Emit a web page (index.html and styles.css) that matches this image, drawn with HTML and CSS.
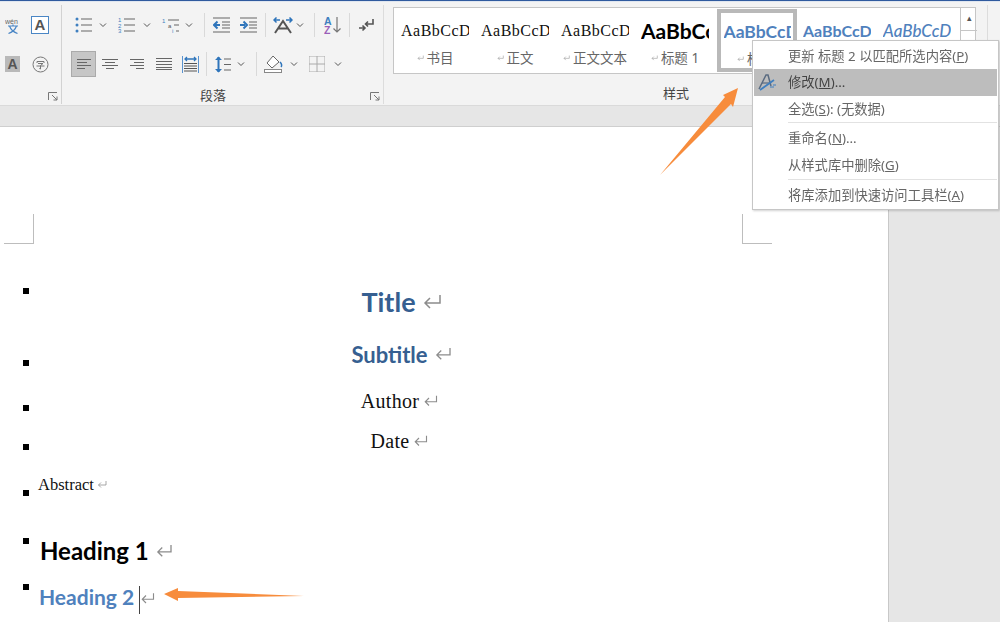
FILE: index.html
```html
<!DOCTYPE html>
<html lang="zh">
<head>
<meta charset="utf-8">
<title>Word</title>
<link rel="stylesheet" href="styles.css">
</head>
<body>
<svg class="defs" width="0" height="0">
  <symbol id="ret" viewBox="0 0 20 16"><path d="M18 1v8H3M8 4 3 9l5 5" fill="none" stroke="#8c8c8c" stroke-width="1.5"/></symbol>
  <symbol id="chev" viewBox="0 0 8 8"><path d="M1 2.5 4 5.5 7 2.5" fill="none" stroke="#555" stroke-width="1"/></symbol>
  <symbol id="launch" viewBox="0 0 10 9"><path d="M.5 8V.5H9M4 3l5 5M9 4.5V8H5.5" fill="none" stroke="#777" stroke-width="1"/></symbol>
</svg>
<div class="app">
  <header class="ribbon">
    <section class="grp font-end">
      <div class="tool-row r-top">
        <svg class="ic ml5" width="16" height="17" viewBox="0 0 16 17"><text x="0" y="7" class="wen">wén</text><path d="M3 9h10M8 7.5V9M4.5 9c1 3 4 6 8 7.500M11.500 9c-1 3-4 6-8 7.500" fill="none" stroke="#4a86c5" stroke-width="1.200"/></svg>
        <span class="boxA">A</span>
      </div>
      <div class="tool-row r-bot">
        <span class="grayA">A</span>
        <svg class="ic ml12" width="17" height="17" viewBox="0 0 17 17"><circle cx="8.500" cy="8.500" r="7.500" fill="none" stroke="#777"/><path d="M5 7V5.500h7V7M6 7.500h5L8.500 9.500V13l-1.200-.5M4.500 10h8" fill="none" stroke="#777"/></svg>
      </div>
      <svg class="launch lf" width="10" height="9"><use href="#launch"/></svg>
    </section>
    <section class="grp para-grp">
      <div class="tool-row r-top">
        <svg class="ic ml13" width="18" height="16" viewBox="0 0 18 16"><g fill="#3f7fc0"><circle cx="2" cy="2" r="1.500"/><circle cx="2" cy="8" r="1.500"/><circle cx="2" cy="14" r="1.500"/></g><path d="M6 2h11M6 8h11M6 14h11" stroke="#666" stroke-width="1.200"/></svg>
        <svg class="chev ml6" width="8" height="8"><use href="#chev"/></svg>
        <svg class="ic ml11" width="18" height="16" viewBox="0 0 18 16"><g fill="#3f7fc0" font-size="6" font-family="Liberation Sans"><text x="0" y="5">1</text><text x="0" y="11">2</text><text x="0" y="16">3</text></g><path d="M6 2h11M6 8h11M6 14h11" stroke="#666" stroke-width="1.200"/></svg>
        <svg class="chev ml7" width="8" height="8"><use href="#chev"/></svg>
        <svg class="ic ml11" width="18" height="16" viewBox="0 0 18 16"><g font-size="6" font-family="Liberation Sans"><text x="0" y="6" fill="#3f7fc0">1</text><text x="6" y="11" fill="#555">a</text><text x="10" y="16" fill="#3f7fc0">i</text></g><path d="M6 3h11M12 8h5M14 14h3" stroke="#666" stroke-width="1.200"/></svg>
        <svg class="chev ml5" width="8" height="8"><use href="#chev"/></svg>
        <i class="sep ml11"></i>
        <svg class="ic ml8" width="17" height="16" viewBox="0 0 17 16"><path d="M0 1h17M9 5h8M9 8h8M9 11h8M0 15h17" stroke="#666" stroke-width="1.200"/><path d="M7 8H2M4.500 4.500 1 8l3.500 3.500" fill="none" stroke="#2f75bb" stroke-width="2"/></svg>
        <svg class="ic ml10" width="17" height="16" viewBox="0 0 17 16"><path d="M0 1h17M9 5h8M9 8h8M9 11h8M0 15h17" stroke="#666" stroke-width="1.200"/><path d="M0 8h5M3.500 4.500 7 8l-3.500 3.500" fill="none" stroke="#2f75bb" stroke-width="2"/></svg>
        <i class="sep ml8"></i>
        <svg class="ic ml7" width="20" height="17" viewBox="0 0 20 17"><path d="M2 16 10 4l8 12M5 11.500h10" fill="none" stroke="#555" stroke-width="2"/><path d="M1 3h6M3.500.5 1 3l2.500 2.500M13 3h6M16.500.5 19 3l-2.500 2.500" fill="none" stroke="#2f75bb" stroke-width="1.500"/></svg>
        <svg class="chev ml3" width="8" height="8"><use href="#chev"/></svg>
        <i class="sep ml10"></i>
        <svg class="ic ml9" width="17" height="18" viewBox="0 0 17 18"><text x="0" y="8.500" class="az blue">A</text><text x="0" y="17.500" class="az purple">Z</text><path d="M13 1v15M9.500 12.500 13 16l3.500-3.500" fill="none" stroke="#777" stroke-width="1.200"/></svg>
        <i class="sep ml8"></i>
        <svg class="ic ml8" width="16" height="14" viewBox="0 0 16 14"><path d="M15 1v5H8M10 3.500 7.500 6 10 8.500" fill="none" stroke="#555" stroke-width="1.600"/><path d="M1 10h6M4.500 7.500 7 10l-2.500 2.500" fill="none" stroke="#555" stroke-width="1.600"/></svg>
      </div>
      <div class="tool-row r-bot">
        <span class="align-on ml9"><svg width="14" height="10" viewBox="0 0 14 10"><path d="M0 .5h14M0 3.500h10M0 6.500h14M0 9.500h8" stroke="#666"/></svg></span>
        <svg class="ic ml6" width="16" height="11" viewBox="0 0 16 11"><path d="M0 .5h16M3 3.500h10M0 6.500h16M4 9.500h8" stroke="#666"/></svg>
        <svg class="ic ml12" width="14" height="11" viewBox="0 0 14 11"><path d="M0 .5h14M4 3.500h10M0 6.500h14M6 9.500h8" stroke="#666"/></svg>
        <svg class="ic ml12" width="16" height="12" viewBox="0 0 16 12"><path d="M0 .5h16M0 3.500h16M0 6.500h16M0 9.500h16M0 11.500h16" stroke="#666"/></svg>
        <svg class="ic ml10" width="17" height="17" viewBox="0 0 17 17"><path d="M.5 0v17M16.500 0v17" stroke="#5a93cf"/><path d="M3 3h11M5 1 3 3l2 2M12 1l2 2-2 2" fill="none" stroke="#2f75bb" stroke-width="1.300"/><path d="M2 7.500h13M2 10h13M2 12.500h13M2 15h13" stroke="#555"/></svg>
        <i class="sep ml7 h-low"></i>
        <svg class="ic ml8" width="16" height="17" viewBox="0 0 16 17"><path d="M3.500 1v15" stroke="#2f75bb" stroke-width="2"/><path d="M0 4 3.500.5 7 4M0 13l3.500 3.500L7 13" fill="#2f75bb"/><path d="M9 3h7M9 8.500h7M9 14h7" stroke="#666" stroke-width="1.200"/></svg>
        <svg class="chev ml6" width="8" height="8"><use href="#chev"/></svg>
        <i class="sep ml11 h-low"></i>
        <svg class="ic ml7" width="19" height="18" viewBox="0 0 19 18"><path d="M9 1 3 8l5 5 7-6z" fill="#fff" stroke="#666"/><path d="M16 7c2 2 2 4 1 5" fill="none" stroke="#2f75bb" stroke-width="1.500"/><rect x=".5" y="14.500" width="17" height="3" fill="#fff" stroke="#888"/></svg>
        <svg class="chev ml7" width="8" height="8"><use href="#chev"/></svg>
        <svg class="ic ml11" width="16" height="16" viewBox="0 0 16 16"><path d="M.5.500h15M.5 15.500h15M.5.500v15M15.500.500v15" stroke="#aaa" stroke-dasharray="1 1"/><path d="M8 0v16M0 8h16" stroke="#aaa"/></svg>
        <svg class="chev ml9" width="8" height="8"><use href="#chev"/></svg>
      </div>
      <div class="grp-label para-label">段落</div>
      <svg class="launch lp" width="10" height="9"><use href="#launch"/></svg>
    </section>
    <section class="styles-grp">
      <div class="gallery">
        <div class="style-item"><span class="sample serif">AaBbCcD</span><span class="style-name"><svg width="7" height="6"><use href="#ret"/></svg>书目</span></div>
        <div class="style-item"><span class="sample serif">AaBbCcD</span><span class="style-name"><svg width="7" height="6"><use href="#ret"/></svg>正文</span></div>
        <div class="style-item"><span class="sample serif">AaBbCcD</span><span class="style-name"><svg width="7" height="6"><use href="#ret"/></svg>正文文本</span></div>
        <div class="style-item"><span class="sample h1s">AaBbCcD</span><span class="style-name"><svg width="7" height="6"><use href="#ret"/></svg>标题 1</span></div>
        <div class="style-item picked"><span class="sample h2s">AaBbCcD</span><span class="style-name"><svg width="7" height="6"><use href="#ret"/></svg>标题</span></div>
        <div class="style-item"><span class="sample h3s">AaBbCcD</span></div>
        <div class="style-item"><span class="sample h4s">AaBbCcD</span></div>
        <div class="gal-scroll"><b class="up">▴</b><b></b></div>
      </div>
      <div class="grp-label styles-label">样式</div>
    </section>
  </header>
  <div class="band"></div>
  <main class="doc">
    <article class="page">
      <div class="row r1"><i class="bullet"></i><div class="c title">Title<svg class="mk mk-l"><use href="#ret"/></svg></div></div>
      <div class="row r2"><i class="bullet"></i><div class="c subtitle">Subtitle<svg class="mk mk-m"><use href="#ret"/></svg></div></div>
      <div class="row r3"><i class="bullet"></i><div class="c author">Author<svg class="mk mk-s"><use href="#ret"/></svg></div></div>
      <div class="row r4"><i class="bullet"></i><div class="c author">Date<svg class="mk mk-s"><use href="#ret"/></svg></div></div>
      <div class="row r5"><i class="bullet"></i><div class="abstract">Abstract<svg class="mk mk-xs"><use href="#ret"/></svg></div></div>
      <div class="row r6"><i class="bullet"></i><div class="h1">Heading 1<svg class="mk mk-m"><use href="#ret"/></svg></div></div>
      <div class="row r7"><i class="bullet"></i><div class="h2">Heading 2<i class="caret"></i><svg class="mk mk-m2"><use href="#ret"/></svg></div></div>
      <i class="crop crop-l"></i>
      <i class="crop crop-r"></i>
    </article>
    <aside class="side"></aside>
  </main>

  <nav class="menu">
    <div class="mi mi-first">更新 标题 2 以匹配所选内容(<u>P</u>)</div>
    <div class="mi on">
      <svg class="mi-ic" width="20" height="19" viewBox="0 0 20 19"><path d="M2 16 9 2h2l3 11" fill="none" stroke="#5a6b80" stroke-width="1.500"/><path d="M5 10h7" stroke="#5a6b80" stroke-width="1.200"/><path d="M3 17 17 7" stroke="#3f7fc0" stroke-width="1.800"/><path d="M13 14h4M16 12h3" stroke="#3f7fc0"/></svg>
      修改(<u>M</u>)...
    </div>
    <div class="mi">全选(<u>S</u>): (无数据)</div>
    <hr>
    <div class="mi">重命名(<u>N</u>)...</div>
    <div class="mi">从样式库中删除(<u>G</u>)</div>
    <hr>
    <div class="mi">将库添加到快速访问工具栏(<u>A</u>)</div>
  </nav>

  <svg class="arrow arrow-a" width="90" height="110" viewBox="0 0 90 110"><path d="M2 101 67 23 65 21 80 14 75 33 73 30z" fill="#f78c3c"/></svg>
  <svg class="arrow arrow-b" width="150" height="16" viewBox="0 0 150 16"><path d="M6 8 20 2v3l126 5-126 2v3z" fill="#f78c3c"/></svg>
</div>
</body>
</html>
```
FILE: styles.css
```css
* { box-sizing: border-box; }
html, body { margin: 0; padding: 0; height: 622px; overflow: hidden; background: #fff; }
body { font-family: "Noto Sans", "Noto Sans CJK SC", sans-serif; color: #444; }
.defs { position: absolute; }
.app { position: relative; width: 1000px; height: 622px; overflow: hidden; filter: blur(.3px); }

.ribbon { display: flex; height: 105px; background: #f3f3f3; border-top: 1px solid #2f5a9e; box-shadow: inset 0 1px 0 #dfe6f0; }
.grp { position: relative; flex: none; height: 99px; margin-top: 4px; }
.font-end { width: 62px; border-right: 1px solid #d2d2d2; }
.para-grp { width: 322px; border-right: 1px solid #dcdcdc; }
.tool-row { display: flex; align-items: center; height: 20px; }
.r-top { margin-top: 10px; }
.r-bot { margin-top: 16px; height: 26px; }
.ic, .chev { flex: none; display: block; }
.ml3 { margin-left: 3px; } .ml5 { margin-left: 5px; } .ml6 { margin-left: 6px; } .ml7 { margin-left: 7px; }
.ml8 { margin-left: 8px; } .ml9 { margin-left: 9px; } .ml10 { margin-left: 10px; } .ml11 { margin-left: 11px; }
.ml12 { margin-left: 12px; } .ml13 { margin-left: 13px; }
.sep { display: block; flex: none; width: 1px; height: 24px; background: #d9d9d9; }
.h-low { height: 24px; }
.wen { font: 7px "Liberation Sans", sans-serif; fill: #666; }
.boxA { flex: none; width: 18px; height: 18px; margin-left: 10px; border: 1px solid #4a86c5; background: #fff; font: 700 15px/16px "Liberation Sans", sans-serif; color: #555; text-align: center; }
.grayA { flex: none; width: 15px; height: 16px; margin-left: 5px; background: #b9b9b9; font: 700 14px/16px "Liberation Sans", sans-serif; color: #555; text-align: center; }
.align-on { flex: none; display: flex; align-items: center; justify-content: center; width: 25px; height: 26px; background: #c6c6c6; border: 1px solid #aaa; }
.az { font: 700 10.500px "Liberation Sans", sans-serif; }
.blue { fill: #3f7fc0; } .purple { fill: #9a5fb8; }
.launch { position: absolute; top: 87px; }
.lf { left: 48px; } .lp { left: 308px; }
.grp-label { font-size: 13px; line-height: 16px; color: #444; text-align: center; white-space: nowrap; }
.para-label { position: absolute; left: 136px; top: 82px; width: 30px; }

.styles-grp { position: relative; flex: none; width: 604px; padding: 6px 0 0 9px; }
.styles-grp::after { content: ""; position: absolute; right: 0; top: 4px; width: 1px; height: 99px; background: #dcdcdc; }
.gallery { display: flex; width: 583px; height: 67px; background: #fff; border: 1px solid #c6c6c6; padding-left: 7px; }
.style-item { flex: none; display: flex; flex-direction: column; align-items: center; width: 80px; height: 63px; padding: 4px 12px 0 0; overflow: hidden; }
.sample { display: block; flex: none; width: 68px; height: 38px; overflow: hidden; white-space: nowrap; line-height: 38px; color: #111; text-align: left; }
.serif { font: 16px/38px "Liberation Serif", serif; letter-spacing: .5px; }
.h1s { font: 700 21px/38px "Lato", sans-serif; color: #000; }
.h2s { font: 700 17.500px/38px "Lato", sans-serif; color: #4f81bd; }
.h3s { font: 700 16px/38px "Lato", sans-serif; color: #4f81bd; }
.h4s { font: italic 500 17px/38px "Lato", sans-serif; color: #4f81bd; }
.style-name { display: flex; align-items: center; gap: 3px; font-size: 13.500px; line-height: 16px; color: #666; white-space: nowrap; }
.style-item.picked { margin: 1px 6px 0 -4px; width: 80px; height: 63px; border: 4px solid #b9b9b9; padding: 0 2px; }
.picked .sample { width: 67px; }
.picked .style-name { align-self: flex-start; margin-left: 14px; }
.gal-scroll { flex: none; display: flex; flex-direction: column; width: 17px; margin-left: -3px; }
.gal-scroll b { display: block; height: 23px; border: 1px solid #c6c6c6; border-width: 0 0 1px 1px; font-size: 9px; line-height: 20px; text-align: center; color: #555; font-weight: 400; }
.styles-label { position: absolute; left: 277px; top: 84px; width: 30px; }

.band { height: 22px; background: #e6e6e6; border-top: 1px solid #dadada; border-bottom: 1px solid #cfcfcf; }
.doc { display: flex; height: 495px; }
.page { position: relative; flex: none; width: 889px; border-right: 1px solid #c8c8c8; background: #fff; padding-top: 158px; }
.side { flex: 1; background: #e6e6e6; }

.row { display: flex; padding-left: 23px; }
.bullet { flex: none; display: block; width: 6px; height: 6px; background: #000; }
.r1 { height: 34px; } .r1 .bullet { margin-top: 3px; }
.r2 { height: 30px; margin-top: 21px; } .r2 .bullet { margin-top: 20px; }
.r3 { height: 30px; margin-top: 16px; } .r3 .bullet { margin-top: 19px; }
.r4 { height: 30px; margin-top: 10px; } .r4 .bullet { margin-top: 18px; }
.r5 { height: 24px; margin-top: 17px; } .r5 .bullet { margin-top: 17px; }
.r6 { height: 34px; margin-top: 37px; } .r6 .bullet { margin-top: 4px; }
.r7 { height: 30px; margin-top: 14px; } .r7 .bullet { margin-top: 2px; }
.c { width: 745px; text-align: center; white-space: nowrap; }
.title { font: 700 27px/33px "Lato", sans-serif; color: #365f91; }
.subtitle { font: 700 22px/29px "Lato", sans-serif; color: #365f91; }
.author { width: 741px; font: 20px/30px "Liberation Serif", serif; letter-spacing: .3px; color: #111; }
.abstract { margin-left: 9px; font: 16.500px/24px "Liberation Serif", serif; color: #111; }
.h1 { margin-left: 11px; font: 700 24px/33px "Lato", sans-serif; color: #000; }
.h2 { position: relative; margin-left: 10px; font: 700 21px/29px "Lato", sans-serif; color: #4f81bd; white-space: nowrap; }
.mk { display: inline-block; vertical-align: 1px; margin-left: 6px; }
.mk-l { width: 20px; height: 16px; vertical-align: 2px; }
.mk-m { width: 18px; height: 14px; vertical-align: 2px; }
.mk-m2 { width: 15px; height: 13px; margin-left: 0; vertical-align: 0; }
.mk-s { width: 15px; height: 12px; margin-left: 4px; }
.mk-xs { width: 10px; height: 9px; margin-left: 3px; }
.caret { display: inline-block; width: 1px; height: 28px; margin-left: 5px; vertical-align: middle; background: #444; }

.crop { position: absolute; display: block; width: 30px; height: 30px; }
.crop-l { left: 4px; top: 87px; border-right: 1px solid #bdbdbd; border-bottom: 1px solid #bdbdbd; }
.crop-r { left: 742px; top: 87px; border-left: 1px solid #bdbdbd; border-bottom: 1px solid #bdbdbd; }

.menu { position: absolute; left: 752px; top: 40px; width: 247px; height: 170px; padding: 2px 1px; background: #fff; border: 1px solid #c6c6c6; box-shadow: 1px 1px 2px rgba(0, 0, 0, .18); font-size: 13.300px; color: #666; }
.mi { position: relative; height: 27px; padding-left: 34px; line-height: 27px; white-space: nowrap; }
.mi.mi-first { height: 26px; line-height: 26px; }
.mi.on { background: #bdbdbd; color: #444; }
.mi-ic { position: absolute; left: 3px; top: 4px; }
.menu hr { height: 1px; margin: -1px 0 2px 34px; border: 0; background: #e2e2e2; }
.menu hr + .mi + .mi + hr { margin-top: 0; }

.arrow { position: absolute; display: block; }
.arrow-a { left: 658px; top: 74px; }
.arrow-b { left: 158px; top: 586px; }
```
